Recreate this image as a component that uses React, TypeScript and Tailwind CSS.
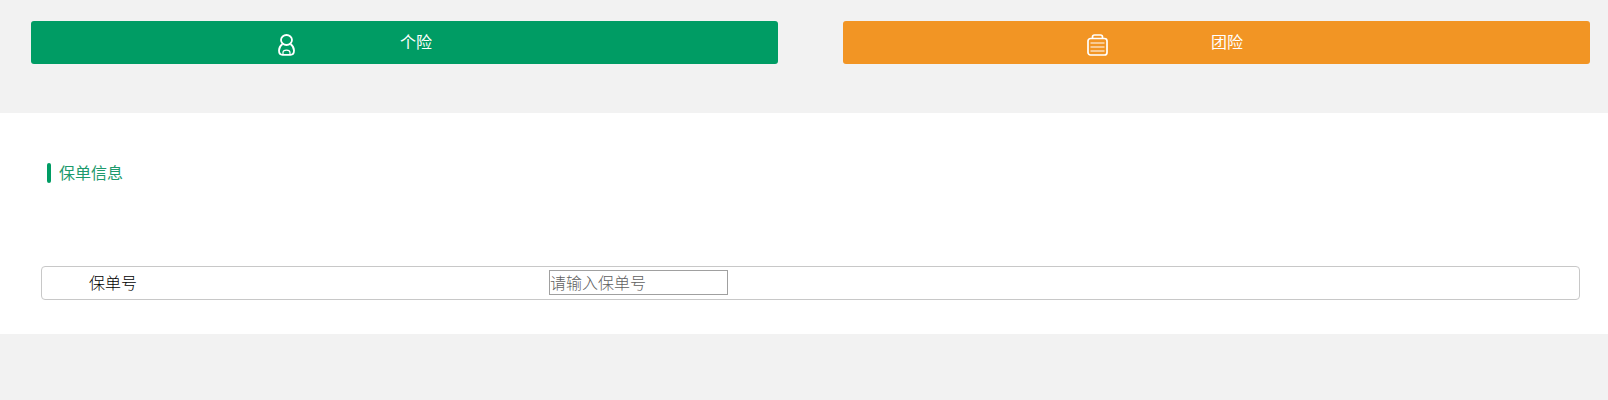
export default function App() {
  return (
    <div className="h-[400px] bg-[#f2f2f2] font-['Noto_Sans_CJK_SC',sans-serif] text-base">
      <div className="flex gap-[65px] pl-[31px] pt-[21px] h-[113px]">
        <div className="flex items-center w-[747px] h-[43px] rounded-[3px] bg-[#009c64] text-white pl-[247px]">
          <svg width="17" height="22" viewBox="0 0 17 22" fill="none" stroke="currentColor" strokeWidth="1.8" className="mt-[5px]">
            <ellipse cx="8.5" cy="6" rx="5.500" ry="5" />
            <path d="M4.500 10 C2.500 11.500 1 13.500 1 16.500 C1 19.500 2.500 20.800 4.500 20.800 L12.500 20.800 C14.500 20.800 16 19.500 16 16.500 C16 13.500 14.500 11.500 12.500 10" />
            <path d="M5 20.500 V18.500 C5 17 6 16.200 8.500 16.200 C11 16.200 12 17 12 18.500 V20.500" strokeWidth="1.200" />
          </svg>
          <span className="ml-[105px] mb-[4px]">个险</span>
        </div>
        <div className="flex items-center w-[747px] h-[43px] rounded-[3px] bg-[#f29524] text-white pl-[244px]">
          <svg width="21" height="22" viewBox="0 0 21 22" fill="none" stroke="currentColor" className="mt-[5px]">
            <rect x="1" y="4.500" width="19" height="16.500" rx="2.500" strokeWidth="1.700" />
            <path d="M5.500 4.500 V3 C5.500 1.800 6.300 1 7.500 1 H13.500 C14.700 1 15.500 1.800 15.500 3 V4.500" strokeWidth="1.700" />
            <path d="M3.500 9 H17.500 M3.500 13 H17.500 M3.500 17 H17.500" strokeWidth="1.200" />
          </svg>
          <span className="ml-[103px] mb-[4px]">团险</span>
        </div>
      </div>
      <div className="h-[221px] bg-white pt-[50px] pl-[41px] pr-[28px]">
        <div className="flex items-center h-[20px] pl-[6px] text-[#1d9a6c]">
          <span className="w-1 h-[20px] rounded-[2px] bg-[#009c64]" />
          <span className="ml-2 mb-[2px]">保单信息</span>
        </div>
        <div className="flex items-center h-[34px] mt-[83px] rounded-[4px] border border-[#c8c8c8] text-black">
          <div className="w-[507px] pl-[47px] mb-[2px] font-light">保单号</div>
          <input
            placeholder="请输入保单号"
            className="w-[179px] h-[25px] mb-[2px] px-0 border border-[#a0a0a0] font-light outline-none placeholder:text-[#5f5f5f]"
          />
        </div>
      </div>
    </div>
  );
}
